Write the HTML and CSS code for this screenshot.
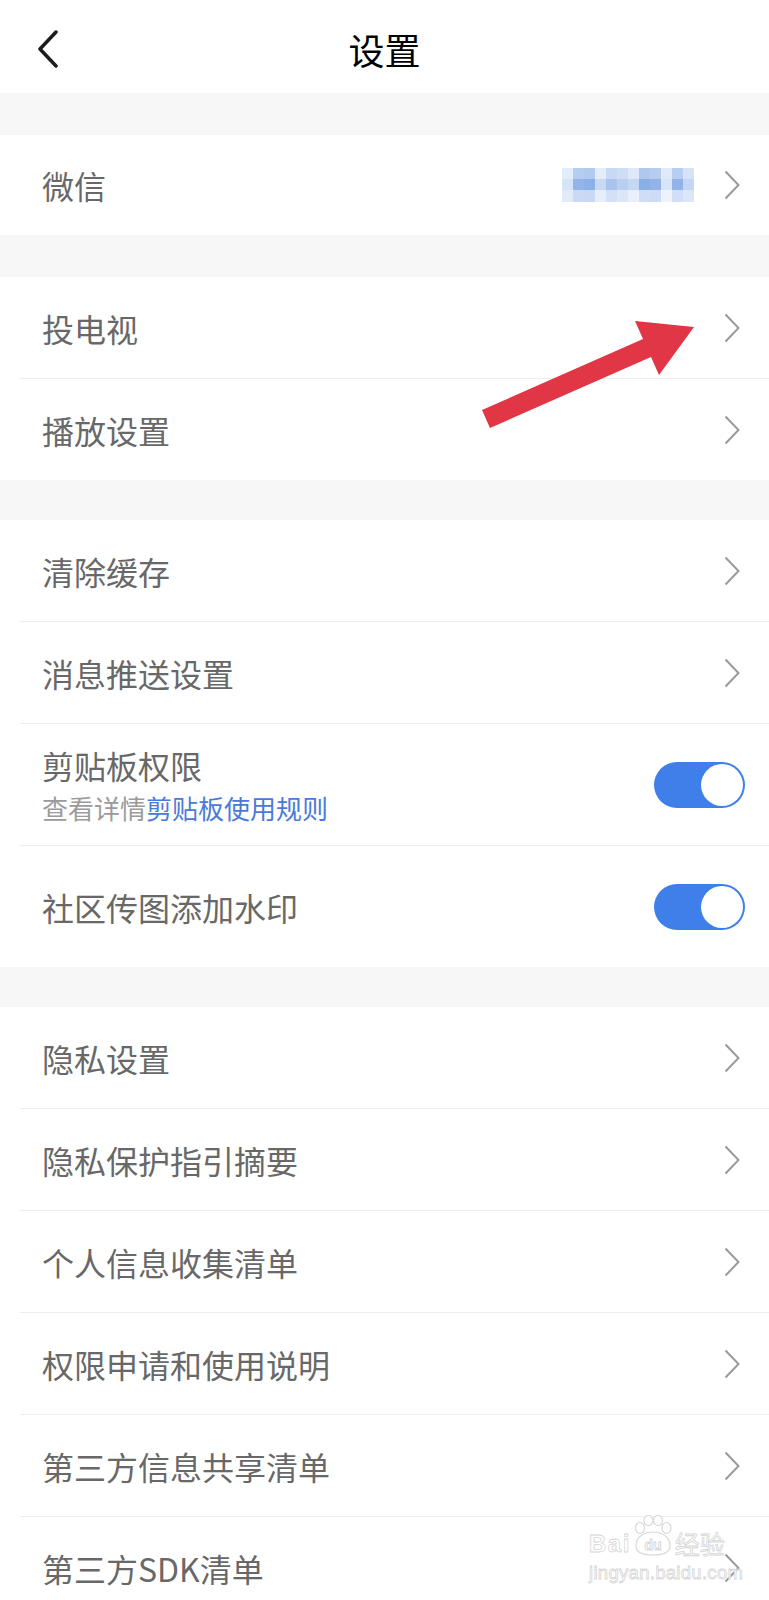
FILE: index.html
```html
<!DOCTYPE html>
<html lang="zh-CN">
<head>
  <meta charset="UTF-8" />
  <meta name="viewport" content="width=device-width, initial-scale=1.0"/>
  <title>设置</title>
  <link rel="stylesheet" href="styles.css">
</head>
<body>
  <div class="header">
    <div class="back">
      <svg width="24" height="38" viewBox="0 0 24 38"><path d="M20 2 L4 19 L20 36" fill="none" stroke="#1c1c1c" stroke-width="3.5" stroke-linecap="round" stroke-linejoin="round"/></svg>
    </div>
    <h1>设置</h1>
    <div></div>
  </div>

  <div class="section first">
    <div class="row">
      <span class="label">微信</span>
      <div class="blur">
        <i style="background:#e3ecf9"></i><i style="background:#b7cdf0"></i><i style="background:#b3caef"></i><i style="background:#e4ecf9"></i><i style="background:#c8d9f4"></i><i style="background:#cfdcf4"></i><i style="background:#dfe8f8"></i><i style="background:#b0c8ee"></i><i style="background:#b7cdf0"></i><i style="background:#e0eaf9"></i><i style="background:#b8cef0"></i><i style="background:#d6e2f6"></i>
        <i style="background:#d7e3f6"></i><i style="background:#94b5e9"></i><i style="background:#8cb0e8"></i><i style="background:#c9d9f4"></i><i style="background:#a8c3ee"></i><i style="background:#b9cff1"></i><i style="background:#c6d7f3"></i><i style="background:#8aaee7"></i><i style="background:#93b4e9"></i><i style="background:#d8e4f7"></i><i style="background:#92b3e8"></i><i style="background:#c4d6f3"></i>
        <i style="background:#e1eaf8"></i><i style="background:#cadaf4"></i><i style="background:#c9d9f4"></i><i style="background:#e6eefa"></i><i style="background:#d3e0f6"></i><i style="background:#dbe6f7"></i><i style="background:#eaf0fb"></i><i style="background:#d0def5"></i><i style="background:#cddbf5"></i><i style="background:#eef3fb"></i><i style="background:#d1def5"></i><i style="background:#dce6f7"></i>
      </div>
      <svg class="chev" width="16" height="30" viewBox="0 0 16 30"><path d="M1.5 1.5 L14.5 15 L1.5 28.5" fill="none" stroke="#9a9a9a" stroke-width="2"/></svg>
    </div>
  </div>

  <div class="section">
    <div class="row">
      <span class="label">投电视</span>
      <svg class="chev" width="16" height="30" viewBox="0 0 16 30"><path d="M1.5 1.5 L14.5 15 L1.5 28.5" fill="none" stroke="#9a9a9a" stroke-width="2"/></svg>
    </div>
    <div class="row">
      <span class="label">播放设置</span>
      <svg class="chev" width="16" height="30" viewBox="0 0 16 30"><path d="M1.5 1.5 L14.5 15 L1.5 28.5" fill="none" stroke="#9a9a9a" stroke-width="2"/></svg>
    </div>
  </div>

  <div class="section mid">
    <div class="row">
      <span class="label">清除缓存</span>
      <svg class="chev" width="16" height="30" viewBox="0 0 16 30"><path d="M1.5 1.5 L14.5 15 L1.5 28.5" fill="none" stroke="#9a9a9a" stroke-width="2"/></svg>
    </div>
    <div class="row">
      <span class="label">消息推送设置</span>
      <svg class="chev" width="16" height="30" viewBox="0 0 16 30"><path d="M1.5 1.5 L14.5 15 L1.5 28.5" fill="none" stroke="#9a9a9a" stroke-width="2"/></svg>
    </div>
    <div class="row tall">
      <div class="text">
        <span class="label">剪贴板权限</span>
        <span class="sub">查看详情<a>剪贴板使用规则</a></span>
      </div>
      <div class="toggle"><span></span></div>
    </div>
    <div class="row tall">
      <span class="label">社区传图添加水印</span>
      <div class="toggle"><span></span></div>
    </div>
  </div>

  <div class="section mid">
    <div class="row">
      <span class="label">隐私设置</span>
      <svg class="chev" width="16" height="30" viewBox="0 0 16 30"><path d="M1.5 1.5 L14.5 15 L1.5 28.5" fill="none" stroke="#9a9a9a" stroke-width="2"/></svg>
    </div>
    <div class="row">
      <span class="label">隐私保护指引摘要</span>
      <svg class="chev" width="16" height="30" viewBox="0 0 16 30"><path d="M1.5 1.5 L14.5 15 L1.5 28.5" fill="none" stroke="#9a9a9a" stroke-width="2"/></svg>
    </div>
    <div class="row">
      <span class="label">个人信息收集清单</span>
      <svg class="chev" width="16" height="30" viewBox="0 0 16 30"><path d="M1.5 1.5 L14.5 15 L1.5 28.5" fill="none" stroke="#9a9a9a" stroke-width="2"/></svg>
    </div>
    <div class="row">
      <span class="label">权限申请和使用说明</span>
      <svg class="chev" width="16" height="30" viewBox="0 0 16 30"><path d="M1.5 1.5 L14.5 15 L1.5 28.5" fill="none" stroke="#9a9a9a" stroke-width="2"/></svg>
    </div>
    <div class="row">
      <span class="label">第三方信息共享清单</span>
      <svg class="chev" width="16" height="30" viewBox="0 0 16 30"><path d="M1.5 1.5 L14.5 15 L1.5 28.5" fill="none" stroke="#9a9a9a" stroke-width="2"/></svg>
    </div>
    <div class="row">
      <span class="label">第三方SDK清单</span>
      <svg class="chev" width="16" height="30" viewBox="0 0 16 30"><path d="M1.5 1.5 L14.5 15 L1.5 28.5" fill="none" stroke="#9a9a9a" stroke-width="2"/></svg>
    </div>
  </div>

  <!-- annotation arrow drawn over the list -->
  <svg class="arrow" width="769" height="500" viewBox="0 0 769 500">
    <polygon points="482,410 643,339 635,321 694,327 659,375 651,357 490,428" fill="#e13645"/>
  </svg>

  <div class="watermark">
    <div class="wm-top">
      <span class="wm-bai">Bai</span>
      <svg width="44" height="42" viewBox="0 0 44 42">
        <g fill="#fff" stroke="#d8d8d8" stroke-width="1.2">
          <ellipse cx="9" cy="13" rx="4.5" ry="5.5"/>
          <ellipse cx="17.5" cy="5.5" rx="4.5" ry="5"/>
          <ellipse cx="27" cy="5.5" rx="4.5" ry="5"/>
          <ellipse cx="35.5" cy="13" rx="4.5" ry="5.5"/>
          <path d="M5 31 C5 21 14 17 22 17 C30 17 39 21 39 31 C39 39 30 40 22 40 C14 40 5 39 5 31 Z"/>
        </g>
        <text x="22" y="35" text-anchor="middle" class="wm-du">du</text>
      </svg>
      <span class="wm-jy">经验</span>
    </div>
    <div class="wm-url">jingyan.baidu.com</div>
  </div>
</body>
</html>
```

FILE: styles.css
```css
body {
  margin: 0;
  position: relative;
  background-color: #f7f7f7;
  font-family: "Noto Sans CJK SC", "Noto Sans", sans-serif;
  overflow: hidden;
}
.header {
  height: 93px;
  background-color: white;
  display: grid;
  grid-template-columns: 1fr auto 1fr;
  align-items: center;
}
.back {
  padding-left: 36px;
  padding-top: 5px;
  display: flex;
}
h1 {
  margin: 0;
  font-size: 36px;
  font-weight: 400;
  color: #000;
  line-height: 40px;
  padding-top: 4px;
}
.section {
  background-color: white;
  margin-top: 42px;
}
.section.mid {
  margin-top: 40px;
}
.row {
  min-height: 101px;
  margin-left: 20px;
  padding: 0 24px 0 22px;
  display: flex;
  align-items: center;
}
.row + .row {
  border-top: 1px solid #eeeeee;
}
.first .row {
  min-height: 100px;
}
.row.tall {
  min-height: 121px;
}
.label {
  font-size: 32px;
  line-height: 40px;
  color: #686868;
  flex: 1;
}
.text {
  flex: 1;
  display: flex;
  flex-direction: column;
  gap: 5px;
  padding-top: 1px;
}
.sub {
  font-size: 26px;
  line-height: 36px;
  color: #9b9b9b;
}
.sub a {
  color: #4a7ad9;
}
.chev {
  margin-right: 5px;
  flex: none;
}
.blur {
  display: grid;
  grid-template-columns: repeat(12, 11px);
  grid-template-rows: 11px 11px 12px;
  margin-right: 30px;
}
.toggle {
  width: 91px;
  height: 46px;
  border-radius: 23px;
  background-color: #3e7fea;
  display: flex;
  justify-content: flex-end;
  align-items: center;
  padding: 0 2px;
  box-sizing: border-box;
}
.toggle span {
  width: 42px;
  height: 42px;
  border-radius: 50%;
  background-color: white;
}
.arrow {
  position: absolute;
  left: 0;
  top: 0;
  pointer-events: none;
}
.watermark {
  position: absolute;
  left: 589px;
  top: 1515px;
  width: 145px;
  font-family: "Liberation Sans", sans-serif;
  color: white;
  -webkit-text-stroke: 0.8px #d6d6d6;
}
.wm-top {
  display: flex;
  align-items: flex-end;
  height: 42px;
}
.wm-bai {
  font-size: 24px;
  font-weight: bold;
  line-height: 24px;
  letter-spacing: 1.5px;
  margin-bottom: 1px;
}
.wm-du {
  font-family: "Liberation Sans", sans-serif;
  font-size: 14px;
  font-weight: bold;
  fill: white;
  stroke: #d2d2d2;
  stroke-width: 0.8px;
}
.wm-jy {
  font-family: "Noto Sans CJK SC", sans-serif;
  font-size: 25px;
  line-height: 27px;
}
.wm-url {
  font-size: 18.5px;
  line-height: 22px;
  margin-top: 5px;
  letter-spacing: 0.3px;
}
```
